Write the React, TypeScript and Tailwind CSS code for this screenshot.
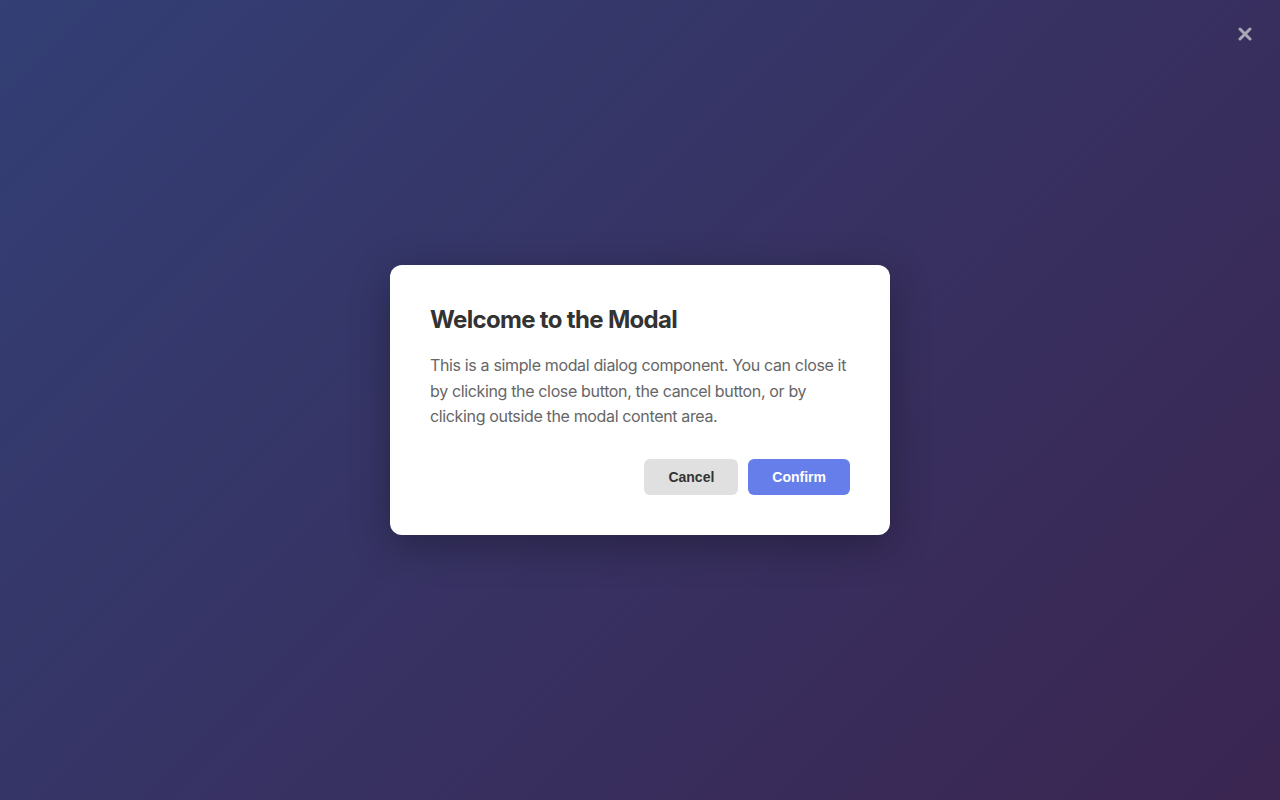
import React from "react";

export default function App() {
  return (
    <div className="relative h-[800px] w-[1280px] overflow-hidden bg-[linear-gradient(135deg,#667eea_0%,#764ba2_100%)] font-['Inter',sans-serif]">
      <div className="flex h-full w-full items-center justify-center bg-black/50">
        <div className="w-[500px] rounded-xl bg-white p-10 shadow-[0_10px_40px_rgba(0,0,0,0.3)]">
          <h2 className="mb-[18px] text-2xl leading-[30px] font-bold tracking-[-0.028em] text-[#333]">Welcome to the Modal</h2>
          <p className="text-base leading-[1.6] tracking-[-0.022em] text-[#666]">
            This is a simple modal dialog component. You can close it by clicking the close button, the cancel button, or by clicking outside the modal content area.
          </p>
          <div className="mt-[29px] flex justify-end gap-[10px]">
            <button className="rounded-md bg-[#e0e0e0] px-6 py-[10px] font-['Liberation_Sans',Arial,sans-serif] text-sm leading-[16px] font-bold text-[#333]">
              Cancel
            </button>
            <button className="rounded-md bg-[#667eea] px-6 py-[10px] font-['Liberation_Sans',Arial,sans-serif] text-sm leading-[16px] font-bold text-white">
              Confirm
            </button>
          </div>
        </div>
      </div>
      <button className="absolute top-[27px] right-[28px] flex h-[14px] w-[14px] items-center justify-center">
        <svg width="14" height="14" viewBox="0 0 14 14">
          <path d="M2 2L12 12M12 2L2 12" stroke="#a9a9b4" strokeWidth="3" strokeLinecap="round" />
        </svg>
      </button>
    </div>
  );
}
